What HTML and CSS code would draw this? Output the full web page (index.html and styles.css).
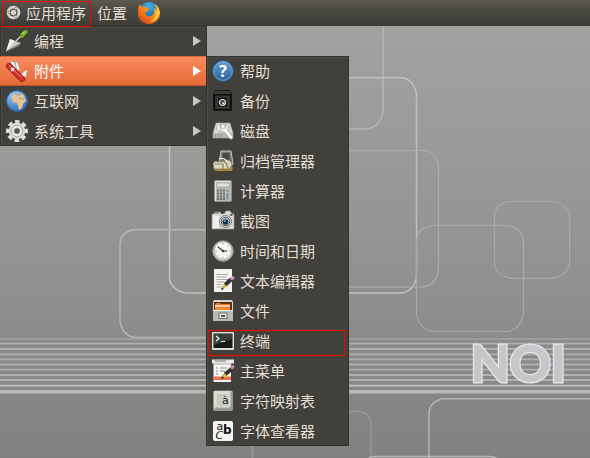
FILE: index.html
```html
<!DOCTYPE html>
<html lang="zh-CN">
<head>
<meta charset="utf-8">
<title>桌面</title>
<link rel="stylesheet" href="styles.css">
</head>
<body>
<div class="desktop">
<svg class="wallpaper" viewBox="0 0 590 458" aria-hidden="true">
  <defs>
    <linearGradient id="bg" x1="0" y1="0" x2="0" y2="1"><stop offset="0" stop-color="#a4a3a1"/><stop offset=".5" stop-color="#959593"/><stop offset="1" stop-color="#818180"/></linearGradient>
    <filter id="glow" x="-20%" y="-20%" width="140%" height="140%"><feGaussianBlur stdDeviation=".7"/></filter>
  </defs>
  <rect width="590" height="458" fill="url(#bg)"/>
  <g fill="none" stroke="#b6b6b4" stroke-width="1.5">
    <path d="M383 26V111Q381 127 366 129H330"/>
    <path d="M169.500 140V280Q174 292 187 293H402Q415 290 416.500 276V94Q414 80 403 77.800H330" stroke="#c0c0be"/>
    <path d="M340 150.500H425Q438 154 438.500 168V271Q435 286 422 287H340" stroke="#adadab" stroke-width="1.200"/>
    <path d="M210 229.800H133Q121 232 120 244V322Q123 336 135 337.500H210"/>
    <path d="M431 225.500H509Q522 229 523.500 241V313Q522 328 508 331.500H433Q418 328 416.500 314V240Q418 228 431 225.500Z" stroke="#aaaaa8" stroke-width="1.200"/>
    <path d="M508 201.500H556Q569 206 569.700 216V264Q565 278 552 278.300H511Q496 276 494.500 264V215Q496 204 508 201.500Z" stroke="#a9a9a7" stroke-width="1.200"/>
    <path d="M340 411.500H360Q370 413 371 423V458" stroke="#989896"/>
    <path d="M252.500 440V458" stroke="#999"/>
    <path d="M590 398.800H442Q430 402 429 412V458"/>
    <path d="M369 458Q370 456.500 374 456.500H491Q494 456.500 496 458"/>
  </g>
  <g stroke="#b0b0af" stroke-width="1.800">
    <path d="M0 339H590" stroke="#9d9d9b"/><path d="M0 343.700H590M0 349H590M0 354.300H590M0 359.300H590M0 364.500H590M0 369.700H590M0 375H590M0 380H590"/>
    <path d="M0 385.600H590" stroke="#c1c1c0"/><path d="M0 391.500H590" stroke="#b8b8b7" stroke-width="3"/><path d="M0 393.500H590" stroke="#a0a09f" stroke-width="1"/>
  </g>
  <g class="noi">
    <text class="noi-glow" x="470.500 509.500 550.500" y="381.500" filter="url(#glow)">NOI</text>
    <text class="noi-face" x="470.500 509.500 550.500" y="381.500">NOI</text>
  </g>
</svg>

<header class="panel">
  <div class="panel-apps">
    <svg class="ubuntu" viewBox="0 0 16 16"><circle cx="8" cy="8" r="7.300" fill="#d9d5cb"/><circle cx="8" cy="8" r="3.600" fill="none" stroke="#56544e" stroke-width="1.500"/><path d="M2 8H5M10 4.500L11.500 2M10 11.500L11.500 14" stroke="#d9d5cb" stroke-width="1"/><circle cx="3.200" cy="8" r="1.300" fill="#eee" stroke="#56544e" stroke-width=".6"/><circle cx="10.500" cy="3.800" r="1.300" fill="#eee" stroke="#56544e" stroke-width=".6"/><circle cx="10.500" cy="12.200" r="1.300" fill="#eee" stroke="#56544e" stroke-width=".6"/></svg>
    <span>应用程序</span>
  </div>
  <span class="panel-places">位置</span>
  <svg class="firefox" viewBox="0 0 24 24">
    <defs><linearGradient id="fx" x1="1" y1="0" x2=".2" y2="1"><stop offset="0" stop-color="#ffd83b"/><stop offset=".5" stop-color="#f78b1c"/><stop offset="1" stop-color="#d93f16"/></linearGradient><radialGradient id="fb" cx=".5" cy=".2" r=".8"><stop offset="0" stop-color="#45b5e3"/><stop offset="1" stop-color="#123f82"/></radialGradient></defs>
    <circle cx="12" cy="11.500" r="10.500" fill="url(#fb)"/>
    <path d="M2.500 3.500L5 6Q7 5 9 6.500L12 8L11 10L8.500 11Q8 15 12 15.500Q15 15 16.500 13Q18 10 17 7Q19 8 19.500 10Q20 6 17 3Q22 5 23 11Q23.500 16 20 19.500Q16 23.500 11 23Q4 22 1.500 16Q0 10 2.500 3.500Z" fill="url(#fx)"/>
    <path d="M20 5Q24 12 19 18Q16 21 12 21Q18 19 19.500 13Q21 9 20 5Z" fill="#ffdc48"/>
  </svg>
</header>

<nav class="menu main-menu">
  <div class="item"><svg class="icon" viewBox="0 0 22 22"><path d="M10 11L17 4" stroke="#c5c8c2" stroke-width="1.500"/><path d="M14 6L17 1.500Q20 0 21.500 1Q22 3 18 6L16 8Z" fill="#70aa1c" stroke="#70aa1c"/><path d="M16 4L19 1.500" stroke="#b4db6b" stroke-width="1.200"/><path d="M0 21.500L4 9L15 13Z" fill="#c5c8c3"/><path d="M0 21.500L4 9L9 11Z" fill="#f0f1ef"/><path d="M0 21.500L15 13L13 16Z" fill="#858a82"/></svg><span>编程</span><i class="arrow"></i></div>
  <div class="item selected"><svg class="icon" viewBox="0 0 22 22"><path d="M7 7L4 1L8 2L11 9M10 9L9 1L12 3L14 11" fill="#edeeed" stroke="#9f9e9c" stroke-width=".6"/><path d="M14 15L20 10L22 12L20 13L21 15L16 19Z" fill="#f1f1f0" stroke="#999" stroke-width=".5"/><path d="M3 6L16 19" stroke="#8f1515" stroke-width="6" stroke-linecap="round"/><path d="M3 6L16 19" stroke="#d63331" stroke-width="4.500" stroke-linecap="round"/><path d="M3 5L15 17" stroke="#f07770" stroke-width="1"/><path d="M5 8L8 11M5 11L8 8" stroke="#fff" stroke-width="1.200"/></svg><span>附件</span><i class="arrow"></i></div>
  <div class="item"><svg class="icon" viewBox="0 0 22 22"><defs><radialGradient id="gl" cx=".35" cy=".25" r=".8"><stop stop-color="#a4c9ef"/><stop offset="1" stop-color="#2c68b2"/></radialGradient></defs><circle cx="11" cy="11" r="10.500" fill="url(#gl)" stroke="#2a63a9"/><path d="M6 7L8 4L12 3L17 4L19 8L20 11L17 14L16 18L13 20L12 16L11 13L7 12Z" fill="#e8c293"/><path d="M9 4L13 5L16 4M13 8L18 9" stroke="#8da3aa" fill="none"/></svg><span>互联网</span><i class="arrow"></i></div>
  <div class="item"><svg class="icon" viewBox="0 0 22 22"><circle cx="11" cy="11" r="9.100" fill="none" stroke="#dededc" stroke-width="3.800" stroke-dasharray="4.300 2.847" transform="rotate(-13.500 11 11)"/><circle cx="11" cy="11" r="8.300" fill="#d9d9d7"/><circle cx="11" cy="11" r="5.700" fill="#eee" stroke="#a7a7a4"/><circle cx="11" cy="11" r="2.800" fill="#55544f" stroke="#858580"/></svg><span>系统工具</span><i class="arrow"></i></div>
</nav>

<nav class="menu sub-menu">
  <div class="item"><svg class="icon" viewBox="0 0 22 22"><defs><linearGradient id="hp" x1="0" y1="0" x2="0" y2="1"><stop stop-color="#6fa2d4"/><stop offset="1" stop-color="#236297"/></linearGradient></defs><circle cx="11" cy="11" r="10.300" fill="url(#hp)" stroke="#255f98"/><circle cx="11" cy="11" r="9.300" fill="none" stroke="#84b1dc" stroke-width=".7"/><text class="help-mark" x="11" y="17" text-anchor="middle">?</text></svg><span>帮助</span></div>
  <div class="item"><svg class="icon" viewBox="0 0 22 22"><path d="M3 0H18L20 4V21H1V4Z" fill="#171817"/><path d="M3 1H18L19 4H2Z" fill="#3a3b39"/><rect x="2.500" y="5" width="16" height="14.500" rx="1" fill="#30312f" stroke="#080808"/><rect x="5.500" y="7" width="10.500" height="10.500" fill="#151615" stroke="#444"/><circle cx="10.500" cy="12.500" r="3" fill="#444" stroke="#ddd" stroke-width="1.200"/><path d="M10.500 12.500L12 14" stroke="#fff" stroke-width="1.300"/></svg><span>备份</span></div>
  <div class="item"><svg class="icon" viewBox="0 0 22 22"><path d="M4 3H18L21 13V18H1V13Z" fill="#d9dad8" stroke="#a9aaa8" stroke-width=".6"/><path d="M1 13H21V18H1Z" fill="#b5b7b3"/><ellipse cx="11" cy="8" rx="6.500" ry="4" fill="#f5f5f4" stroke="#adafaa"/><path d="M3 15H10M3 17H10" stroke="#858782" stroke-dasharray="1 1"/><path d="M9 5V8L11 9.500L13 8V5Q16 7 15 10L21 17Q21 20 18 19L12.500 12Q8 12 8 8Z" fill="#fff" stroke="#91938e" stroke-width=".7"/></svg><span>磁盘</span></div>
  <div class="item"><svg class="icon" viewBox="0 0 22 22"><path d="M1 17H21L20 21H3Z" fill="#b18339"/><path d="M9 1H19L21 14L18 18L7 13Z" fill="#777873" stroke="#c7c8c4"/><path d="M11 3H17L18 9L10 11Z" fill="#464743"/><path d="M1 13Q3 10 7 12L16 10Q20 11 20 15L17 19H2Z" fill="#ddd8bd" stroke="#74705d" stroke-width=".7"/><path d="M7 8L14 13L16 18M3 14H11V19" fill="none" stroke="#85816c" stroke-width="1.200"/><path d="M7 9Q11 7 15 11" fill="none" stroke="#f4f4ed" stroke-width="1.300"/></svg><span>归档管理器</span></div>
  <div class="item"><svg class="icon" viewBox="0 0 22 22"><rect x="2.500" y=".5" width="17" height="21" rx="1" fill="#b8bab6" stroke="#8d8f8b"/><path d="M3.500 21V1.500H18.500" stroke="#e4e5e2" fill="none"/><rect x="5" y="3" width="12" height="4" fill="#dde1da" stroke="#9b9d98" stroke-width=".6"/><path d="M5 10.500H14M5 13.500H14M5 16.500H14M5 19H14" stroke="#666b68" stroke-width="1.800" stroke-dasharray="2 1"/><path d="M15.500 10V12M15.500 13V19.500" stroke="#6898a7" stroke-width="2"/></svg><span>计算器</span></div>
  <div class="item"><svg class="icon" viewBox="0 0 22 22"><path d="M2 4L3 2H8L9 4H12L14 1H18L20 4H22V19H0V4Z" fill="#d8d9d7" stroke="#a2a3a1" stroke-width=".6"/><path d="M1 6H7V18H1Z" fill="#efefee"/><circle cx="13.500" cy="11.500" r="6" fill="#eee" stroke="#777"/><circle cx="13.500" cy="11.500" r="4.300" fill="#c2c7ce" stroke="#444"/><circle cx="13.500" cy="12" r="2.800" fill="#15304d"/><circle cx="13" cy="11" r="1" fill="#7cafdf"/><path d="M3 3H7" stroke="#555"/><rect x="18" y="4" width="2.500" height="2" fill="#666"/></svg><span>截图</span></div>
  <div class="item"><svg class="icon" viewBox="0 0 22 22"><circle cx="11" cy="11" r="10.300" fill="#c7c8c5" stroke="#8e908b"/><circle cx="11" cy="10.500" r="8.700" fill="#f7f7f6" stroke="#aaa" stroke-width=".8"/><path d="M11 3V4.500M11 17V18M3.500 11H5M17 11H18.500M5.700 5.700L6.500 6.500M16 16L15.500 15.500M5.700 16L6.500 15.500M16.300 5.700L15.500 6.500" stroke="#777" stroke-width=".8"/><path d="M6 7L11 11H15" fill="none" stroke="#272827" stroke-width="1.100"/><circle cx="11" cy="11" r="1.200" fill="#333"/></svg><span>时间和日期</span></div>
  <div class="item"><svg class="icon" viewBox="0 0 22 22"><rect x="2" y="-1" width="18" height="23" fill="#f2f2f1"/><path d="M4.500 4.500H16M4.500 7H15M4.500 9.500H16M4.500 12H12M4.500 14.500H10M4.500 17H9" stroke="#aaaaa8"/><path d="M13 15L19.500 9" stroke="#333331" stroke-width="4"/><path d="M11 17.500L13.500 15" stroke="#dfbd3c" stroke-width="3.500"/><path d="M9 20L10 17L12 19Z" fill="#222"/><path d="M20 8.500L20.800 7.800" stroke="#c995be" stroke-width="3.500" stroke-linecap="round"/></svg><span>文本编辑器</span></div>
  <div class="item"><svg class="icon" viewBox="0 0 22 22"><path d="M2 0H20L21 2V21H1V2Z" fill="#d6d7d4"/><rect x="2" y="2" width="18" height="9" fill="#603017"/><path d="M3 5L4 3H8L9 4H18V10H3Z" fill="#e77b2d"/><path d="M3 6H18" stroke="#ffe7c8" stroke-width="1.500"/><path d="M3 8H18V10H3Z" fill="#f18b37"/><rect x="1" y="10.500" width="20" height="10.500" fill="#b9bbb7"/><path d="M1 10.500H21" stroke="#eeeeec"/><rect x="7" y="13" width="8" height="5.500" fill="#e7e8e5" stroke="#70726e"/><rect x="9" y="15" width="4" height="1.800" fill="#454743"/></svg><span>文件</span></div>
  <div class="item terminal"><svg class="icon" viewBox="0 0 22 22"><rect y="2" width="22" height="18" rx="1" fill="#deddda"/><rect x="1.500" y="3.500" width="19" height="14.500" fill="#171a19"/><path d="M2 4H20V9L2 15Z" fill="#3b403d"/><path d="M4 6L7 8.500L4 11M9 11.500H13" fill="none" stroke="#fff" stroke-width="1.200"/></svg><span>终端</span></div>
  <div class="item"><svg class="icon" viewBox="0 0 22 22"><rect x="1.500" y="1" width="17.500" height="21" fill="#f6f6f5"/><path d="M0 -.5H22V3.500H0Z" fill="#e8e8e6"/><path d="M3 1H14" stroke="#777"/><path d="M1 4H20" stroke="#aaa"/><path d="M4 8H6M8 8H15M4 11H6M8 11H13M4 14H6" stroke="#888"/><path d="M1.500 16.500H19V20H1.500Z" fill="#ef714a"/><path d="M13 14.500L20 8.500" stroke="#333" stroke-width="4"/><path d="M11 17L13.500 14.500" stroke="#dfbd3c" stroke-width="3.500"/><path d="M9 19L10.500 16L12 18Z" fill="#222"/><path d="M20 7.500L20.800 6.800" stroke="#bd8bad" stroke-width="3.500" stroke-linecap="round"/></svg><span>主菜单</span></div>
  <div class="item"><svg class="icon" viewBox="0 0 22 22"><rect x="1" y=".5" width="20" height="20.500" rx="2" fill="#969a91"/><path d="M2 1H20L17 4H4V17L2 20Z" fill="#d5d8d0"/><rect x="4" y="3" width="14" height="14" rx="1.500" fill="#c8ccc1" stroke="#e7e9e3"/><text class="char-mark" x="10" y="14">à</text></svg><span>字符映射表</span></div>
  <div class="item"><svg class="icon" viewBox="0 0 22 22"><rect x="1" y="1" width="20" height="20" rx="2" fill="#f4f4f3"/><text class="letters"><tspan class="font-a" x="4.500" y="9.500">a</tspan><tspan class="font-b" x="11" y="14">b</tspan><tspan class="font-c" x="3.500" y="18.500">C</tspan></text></svg><span>字体查看器</span></div>
</nav>
</div>
</body>
</html>
```

FILE: styles.css
```css
*, *::after { box-sizing: border-box; }
body { margin: 0; overflow: hidden; }
.desktop {
  position: relative;
  width: 590px;
  height: 458px;
  overflow: hidden;
  background: #92918f;
  color: #e2dfd5;
  font: 15px/30px "Noto Sans CJK SC", sans-serif;
}
.wallpaper { position: absolute; inset: 0; width: 590px; height: 458px; }
.noi { font: 900 51px Lato, sans-serif; }
.noi-glow { fill: #f0f4f1; stroke: #e4ece9; stroke-width: 3px; }
.noi-face { fill: #c7c6ca; stroke: #c7c6ca; stroke-width: .6px; }
.panel {
  position: relative;
  display: flex;
  align-items: center;
  height: 26px;
  padding-left: 2px;
  background: linear-gradient(#5a5850, #494841 45%, #3e3d37);
  border-bottom: 1px solid #393832;
}
.panel-apps {
  position: relative;
  z-index: 2;
  display: flex;
  flex: none;
  align-items: center;
  gap: 5px;
  width: 89px;
  height: 26px;
  margin-top: 2px;
  padding-left: 3px;
  border: 1px solid #f00;
  line-height: 24px;
  white-space: nowrap;
}
.panel-apps span { margin-top: -2px; }
.ubuntu { width: 15px; height: 15px; flex: none; margin-top: -2px; }
.panel-places { margin-left: 6px; line-height: 26px; white-space: nowrap; }
.firefox { width: 24px; height: 24px; margin-left: 10px; }
.menu {
  position: absolute;
  background: #41403a;
  box-shadow: inset 0 0 0 1px #34332e, inset 1px 1px 0 1px #4b4a43;
}
.main-menu { left: 0; top: 26px; width: 207px; }
.sub-menu { left: 206px; top: 56px; width: 143px; }
.item {
  position: relative;
  display: flex;
  align-items: center;
  gap: 6px;
  height: 30px;
  padding: 0 6px;
  white-space: nowrap;
}
.selected {
  width: 206px;
  background: linear-gradient(#f88a5e, #e66b36);
  border-top: 1px solid #d96539;
  border-bottom: 1px solid #bd5227;
  color: #fff;
}
.icon { width: 22px; height: 22px; flex: none; overflow: visible; }
.arrow {
  width: 8px;
  height: 10px;
  margin-left: auto;
  background: #c9c7c0;
  clip-path: polygon(0 0, 100% 50%, 0 100%);
}
.selected .arrow { margin-right: -1px; background: #fff; }
.terminal::after {
  content: "";
  position: absolute;
  z-index: 1;
  left: 2px;
  top: 4px;
  width: 137px;
  height: 26px;
  border: 1px solid #f00;
}
.help-mark { font: bold 16px "Open Sans", sans-serif; fill: #fff; }
.char-mark { font: 11px "DejaVu Sans", sans-serif; fill: #222; }
.letters { fill: #111; }
.font-a { font: 11px "DejaVu Sans", sans-serif; }
.font-b { font: bold 12px "DejaVu Sans", sans-serif; }
.font-c { font: italic 11px "DejaVu Sans", sans-serif; }
```
